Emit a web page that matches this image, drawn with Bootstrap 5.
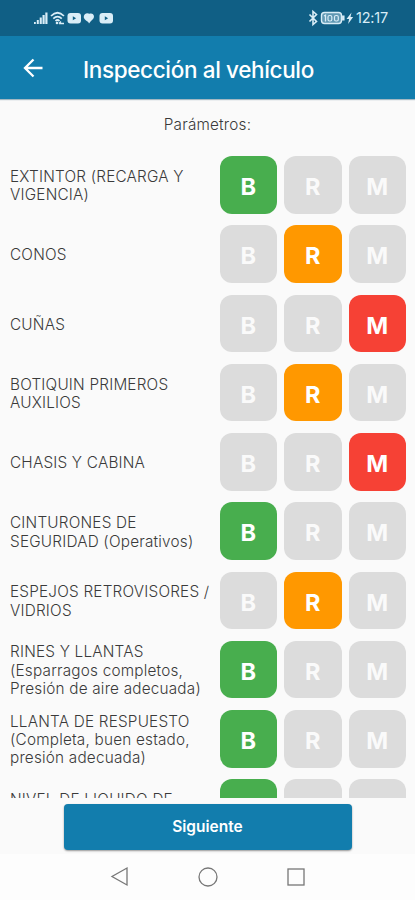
<!DOCTYPE html>
<html lang="es">
<head>
<meta charset="utf-8">
<meta name="viewport" content="width=device-width, initial-scale=1">
<title>Inspección al vehículo</title>
<link href="https://cdn.jsdelivr.net/npm/bootstrap@5.3.0/dist/css/bootstrap.min.css" rel="stylesheet">
<style>
body{font-family:Inter,"Noto Sans",sans-serif;background:#fafafa;color:#3a3a3a;height:900px}
.status{height:36px;background:#105f85;color:#d9edf7;padding:0 27px 0 33px}
.clock{font-size:14.5px;letter-spacing:-.2px;line-height:36px}
.appbar{height:63px;background:#127dad;padding-left:22px;box-shadow:0 1px 1px rgba(0,60,90,.35)}
.appbar h1{font-size:22.5px;font-weight:500;margin-left:39px;letter-spacing:-.36px;padding-top:3px}
.back{margin-top:1px}
.intro{font-size:15.3px;line-height:20px;padding-top:16px;height:57px;font-weight:300;letter-spacing:.2px}
.items{height:642px}
.item{height:69.25px;padding-right:9px;padding-left:10px;flex:none;align-items:flex-start}
.caption{height:57.5px;padding-top:3px;font-size:15.3px;line-height:18.4px;font-weight:300;letter-spacing:.21px;white-space:nowrap}
.choice{width:57.5px;height:57.5px;border-radius:12px;background:#dcdcdc;color:#fafafa;font-size:23.5px;font-weight:700;padding-top:4px}
.choices{gap:7px}
.good{background:#48ae4e;color:#fff}.fair{background:#ff9800;color:#fff}.poor{background:#f64135;color:#fff}
.next{width:288px;height:46px;background:#127dad;border-radius:4px;font-size:15.5px;font-weight:600;box-shadow:0 1px 2px rgba(0,0,0,.4)}
.next,.next:hover{color:#fff}
.footer-action{padding-top:2px}
.sysnav{height:46px;background:#fdfdfd}
</style>
<script src="https://cdn.jsdelivr.net/npm/bootstrap@5.3.0/dist/js/bootstrap.bundle.min.js" defer></script>
</head>
<body class="d-flex flex-column overflow-hidden">
<div class="status d-flex align-items-center justify-content-between">
  <svg width="82" height="18" viewBox="0 0 82 18" fill="currentColor">
    <path d="M1 13h1.800v2H1zM3.800 11h2v4h-2zM6.700 8.500h2.100v6.500H6.700zM9.500 6h2.200v9H9.500zM12.300 3.500h2.200v11.500h-2.200z"/>
    <g fill="none" stroke="currentColor" stroke-width="1.700"><path d="M18 7q6.500-6.500 13 0M20.300 9.700q4.200-4 8.500 0M22.500 12q2-2 4 0"/><path d="M26 14.500h5M28 12.500l-2 2" stroke-width="1.300"/></g>
    <circle cx="24" cy="14" r="1.300"/>
    <rect x="34.500" y="4" width="13.500" height="10.500" rx="3"/><path d="M39.800 7.200v4l3.300-2z" fill="#105f85"/>
    <path d="M56 14.500c-.5-1.500-1.500-2-3-3-2.500-1.800-3-4.500-1.200-6.300 1.500-1.400 3.300-1.200 4.700-.4 1.800-.8 3.800-.2 4.300 1.700.8 2.800-1.300 4-2.800 5.500z"/>
    <rect x="66.500" y="4" width="13.500" height="10.500" rx="3"/><path d="M71.800 7.200v4l3.300-2z" fill="#105f85"/>
  </svg>
  <div class="d-flex align-items-center">
    <svg width="48" height="18" viewBox="0 0 48 18" fill="none" stroke="currentColor">
      <path d="M1.500 5.500l7 7-3.500 3V2.500l3.500 3-7 7" stroke-width="1.600"/>
      <rect x="13.500" y="3.500" width="20" height="11" rx="3" fill="currentColor" fill-opacity=".4" stroke-width="1.400"/>
      <path d="M35.300 6.500v5" stroke-width="2.500"/>
      <path d="M16 7l1.500-.8v6.300" stroke-width="1.300"/><rect x="20" y="6.500" width="3.800" height="5.500" rx="1.500" stroke-width="1.200"/><rect x="26.500" y="6.500" width="3.800" height="5.500" rx="1.500" stroke-width="1.200"/>
      <path d="M43.500 3.500L38.500 10h2.600l-1 5 5-7h-2.600z" fill="currentColor" stroke="none"/>
    </svg>
    <span class="clock">12:17</span>
  </div>
</div>
<header class="appbar d-flex align-items-center text-white">
  <svg class="back" width="22" height="20" viewBox="0 0 22 20" fill="none" stroke="currentColor" stroke-width="2.300"><path d="M20.500 10H3M11.500 1.500L3 10l8.500 8.500"/></svg>
  <h1 class="mb-0">Inspección al vehículo</h1>
</header>
<div class="intro text-center">Parámetros:</div>
<main class="items overflow-hidden d-flex flex-column flex-shrink-0" id="items"></main>
<div class="footer-action d-flex justify-content-center flex-grow-1 align-items-center"><button class="next btn border-0 p-0" type="button">Siguiente</button></div>
<nav class="sysnav d-flex justify-content-center">
  <svg width="200" height="46" viewBox="0 0 200 46" fill="none" stroke="#777" stroke-width="1.300"><path d="M19 14v17L4 22.500z"/><circle cx="100" cy="23" r="9"/><rect x="180" y="15" width="16" height="16"/></svg>
</nav>
<script>
const rows=[["EXTINTOR (RECARGA Y|VIGENCIA)",0],["CONOS",1],["CUÑAS",2],["BOTIQUIN PRIMEROS|AUXILIOS",1],["CHASIS Y CABINA",2],["CINTURONES DE|SEGURIDAD (Operativos)",0],["ESPEJOS RETROVISORES /|VIDRIOS",1],["RINES Y LLANTAS|(Esparragos completos,|Presión de aire adecuada)",0],["LLANTA DE RESPUESTO|(Completa, buen estado,|presión adecuada)",0],["NIVEL DE LIQUIDO DE|FRENOS",0]];
const tone=["good","fair","poor"];
document.getElementById("items").innerHTML=rows.map(([t,s])=>`<div class="item d-flex justify-content-between"><div class="caption d-flex flex-column justify-content-center">${t.split("|").map(l=>`<span>${l}</span>`).join("")}</div><div class="choices d-flex">${["B","R","M"].map((c,i)=>`<div class="choice d-flex align-items-center justify-content-center ${i===s?tone[i]:""}">${c}</div>`).join("")}</div></div>`).join("");
</script>
</body>
</html>
